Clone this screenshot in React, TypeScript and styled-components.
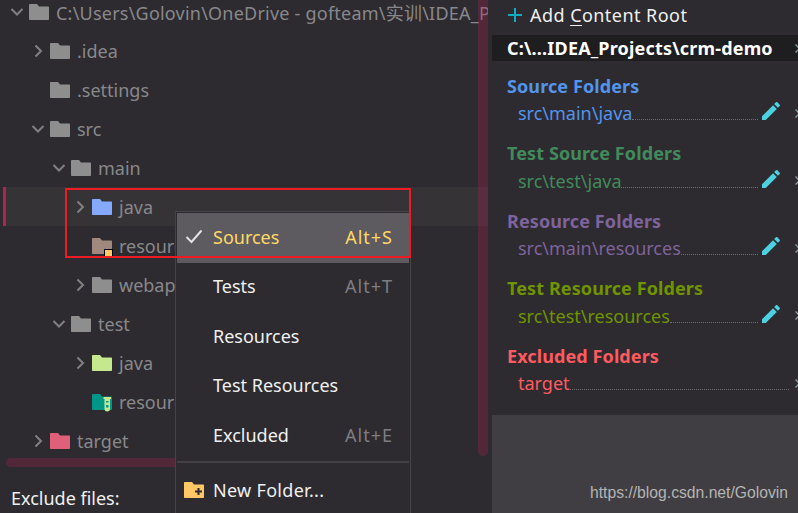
import React from "react";
import styled, { createGlobalStyle } from "styled-components";

const GlobalStyle = createGlobalStyle`
  html, body {
    margin: 0;
    padding: 0;
    background: #2d2b2f;
  }
  body {
    font-family: "Noto Sans", "Noto Sans CJK SC", sans-serif;
    font-size: 18px;
  }
`;

const Frame = styled.div`
  position: relative;
  display: flex;
  width: 798px;
  height: 513px;
  overflow: hidden;
  background: #2d2b2f;
`;

const LeftPane = styled.div`
  position: relative;
  display: flex;
  flex-direction: column;
  flex: 0 0 488px;
  width: 488px;
  overflow: hidden;
`;

const Tree = styled.div`
  flex: 0 0 466px;
  margin-top: -8px;
  overflow: hidden;
`;

const Row = styled.div<{ $depth: number; $selected?: boolean }>`
  display: flex;
  align-items: center;
  height: 39px;
  white-space: nowrap;
  color: #88888c;
  padding-left: ${(p) => 10 + p.$depth * 21 - (p.$selected ? 6 : 0)}px;
  margin-left: ${(p) => (p.$selected ? 3 : 0)}px;
  border-left: ${(p) => (p.$selected ? "3px solid #b3234f" : "none")};
  background: ${(p) => (p.$selected ? "#363337" : "transparent")};
`;

const ChevronSlot = styled.span`
  display: flex;
  align-items: center;
  justify-content: center;
  flex: 0 0 14px;
  height: 14px;
  margin-right: 5px;
`;

const RowLabel = styled.span<{ $root?: boolean }>`
  margin-left: 7px;
  letter-spacing: ${(p) => (p.$root ? "0.22px" : "0")};
`;

const HorizontalBar = styled.div`
  flex: 0 0 9px;
  width: 320px;
  margin-left: 6px;
  border-radius: 5px;
  background: rgba(168, 33, 84, 0.3);
`;

const ExcludeLabel = styled.div`
  margin: 19px 0 0 11px;
  color: #f0f0f0;
  line-height: 24px;
`;

const VerticalBar = styled.div`
  position: absolute;
  top: 0;
  right: 0;
  width: 10px;
  height: 456px;
  border-radius: 0 0 5px 5px;
  background: rgba(168, 33, 84, 0.3);
`;

const RightPane = styled.div`
  display: flex;
  flex-direction: column;
  flex: 1;
  margin-left: 4px;
  min-width: 0;
`;

const AddRoot = styled.div`
  display: flex;
  align-items: center;
  flex: 0 0 40px;
  margin-top: -5px;
  padding-left: 15px;
  gap: 7px;
  color: #f0f0f0;
  letter-spacing: 0.45px;
  white-space: nowrap;
  u {
    text-underline-offset: 3px;
  }
`;

const RootHeader = styled.div`
  display: flex;
  align-items: center;
  flex: 0 0 26px;
  padding-left: 15px;
  background: #1e1d1f;
  color: #fff;
  font-weight: 700;
  letter-spacing: 0.18px;
  white-space: nowrap;
`;

const Sections = styled.div`
  display: flex;
  flex-direction: column;
  gap: 12px;
  padding-top: 10.6px;
`;

const Section = styled.section<{ $color: string }>`
  color: ${(p) => p.$color};
`;

const SectionTitle = styled.div`
  height: 28px;
  padding-left: 15px;
  line-height: 28px;
  font-weight: 700;
  letter-spacing: 0.1px;
  white-space: nowrap;
`;

const PathRow = styled.div`
  display: flex;
  align-items: center;
  height: 27.5px;
  padding-left: 26px;
  white-space: nowrap;
`;

const Leader = styled.span<{ $long?: boolean }>`
  flex: 1;
  align-self: flex-end;
  margin: 0 ${(p) => (p.$long ? -9 : 4)}px 7px 0;
  border-bottom: 1px dotted #6e6e70;
`;

const PencilSlot = styled.span`
  display: flex;
  flex: none;
  margin-top: -4px;
`;

const CloseSlot = styled.span<{ $end?: boolean }>`
  display: flex;
  flex: 0 0 18px;
  justify-content: flex-end;
  margin-left: ${(p) => (p.$end ? "auto" : "0")};
  overflow: hidden;
`;

const BottomPanel = styled.div`
  display: flex;
  align-items: flex-end;
  justify-content: flex-end;
  margin-top: auto;
  height: 98px;
  padding: 0 10px 11px 0;
  box-sizing: border-box;
  background: #403e42;
`;

const Watermark = styled.span`
  font-family: "Liberation Sans", Arial, sans-serif;
  font-size: 15.7px;
  line-height: 18px;
  color: #b4b4b4;
`;

const Menu = styled.div`
  position: absolute;
  left: 175px;
  top: 211px;
  width: 236px;
  height: 302px;
  padding: 1px;
  box-sizing: border-box;
  background: #2d2b2f;
  border: solid #454347;
  border-width: 1px 1px 0;
  overflow: hidden;
`;

const MenuItem = styled.div<{ $active?: boolean }>`
  display: flex;
  align-items: center;
  height: 49.5px;
  padding: 0 17px 2px 0;
  box-sizing: border-box;
  color: ${(p) => (p.$active ? "#ffd866" : "#f0f0f0")};
  background: ${(p) => (p.$active ? "#5d5b5f" : "transparent")};
`;

const MenuIcon = styled.span`
  display: flex;
  align-items: center;
  justify-content: center;
  flex: 0 0 36px;
  padding-right: 2px;
  box-sizing: border-box;
`;

const MenuLabel = styled.span<{ $wide?: boolean }>`
  flex: 1;
  letter-spacing: ${(p) => (p.$wide ? "0.3px" : "0")};
`;

const Shortcut = styled.span<{ $active?: boolean }>`
  letter-spacing: 1px;
  margin-right: -1px;
  color: ${(p) => (p.$active ? "#ffd866" : "#7e7e82")};
`;

const MenuSeparator = styled.div`
  height: 2px;
  margin: 0 0 4px;
  background: #434145;
`;

const Highlight = styled.div`
  position: absolute;
  left: 65px;
  top: 188px;
  width: 346px;
  height: 70px;
  box-sizing: border-box;
  border: 2px solid #ed1c24;
  pointer-events: none;
`;

type FolderKind = "plain" | "source" | "resource" | "testSource" | "testResource" | "excluded";

const folderColors: Record<FolderKind, string> = {
  plain: "#8e8e8e",
  source: "#84a9ff",
  resource: "#a1887f",
  testSource: "#c5e88f",
  testResource: "#009688",
  excluded: "#e0607a",
};

const FolderIcon = ({ kind }: { kind: FolderKind }) => (
  <svg width="20" height="16" viewBox="0 0 20 16" style={{ overflow: "visible", flex: "none" }}>
    <path
      d="M1 0H8L10 2.5H19C19.6 2.5 20 2.9 20 3.5V15C20 15.6 19.6 16 19 16H1C.4 16 0 15.6 0 15V1C0 .4.4 0 1 0Z"
      fill={folderColors[kind]}
    />
    {kind === "resource" && <rect x="12.5" y="11.5" width="8" height="8" fill="#ffc766" stroke="#000" />}
    {kind === "testResource" && (
      <g>
        <path d="M11.5 3H19V5H18V15C18 16.5 17 17.5 15.2 17.5S12.5 16.5 12.5 15V5H11.5Z" fill="#c5e88f" />
        <rect x="14" y="7" width="2.5" height="1.5" fill="#009688" />
        <rect x="14" y="11" width="2.5" height="2.5" fill="#009688" />
      </g>
    )}
  </svg>
);

const Chevron = ({ open }: { open?: boolean }) => (
  <svg width="14" height="14" viewBox="0 0 14 14">
    <path
      d={open ? "M1.5 4L7 9.5L12.5 4" : "M4.5 1.5L10 7L4.5 12.5"}
      fill="none"
      stroke="#808082"
      strokeWidth="2"
    />
  </svg>
);

const PlusIcon = () => (
  <svg width="16" height="16" viewBox="0 0 16 16">
    <path d="M8 1V15M1 8H15" stroke="#12aabf" strokeWidth="2" />
  </svg>
);

const PencilIcon = () => (
  <svg width="18" height="18" viewBox="3 3 18 18">
    <path
      d="M3 17.25V21h3.75L17.81 9.94l-3.75-3.75L3 17.25zM20.71 7.04c.39-.39.39-1.02 0-1.41l-2.34-2.34c-.39-.39-1.02-.39-1.41 0l-1.83 1.83 3.75 3.75 1.83-1.83z"
      fill="#4dd0e1"
    />
  </svg>
);

const CloseIcon = () => (
  <svg width="9" height="9" viewBox="0 0 9 9" style={{ flex: "none", marginRight: -6 }}>
    <path d="M.5.5L8.5 8.5M8.5.5L.5 8.5" stroke="#8f9ca0" strokeWidth="1.3" fill="none" />
  </svg>
);

const CheckIcon = () => (
  <svg width="18" height="15" viewBox="0 0 18 15">
    <path d="M1.5 8L6.5 13L16.5 1.5" fill="none" stroke="#e2e2e2" strokeWidth="2" />
  </svg>
);

const NewFolderIcon = () => (
  <svg width="20" height="16" viewBox="0 0 20 16">
    <path
      d="M1 0H8L10 2.5H19C19.6 2.5 20 2.9 20 3.5V15C20 15.6 19.6 16 19 16H1C.4 16 0 15.6 0 15V1C0 .4.4 0 1 0Z"
      fill="#ffc766"
    />
    <path d="M14.5 6V13M11 9.5H18" stroke="#2d2b2f" strokeWidth="2" />
  </svg>
);

type TreeNode = {
  depth: number;
  label: string;
  kind: FolderKind;
  chevron?: "open" | "closed";
  selected?: boolean;
};

const nodes: TreeNode[] = [
  { depth: 0, label: "C:\\Users\\Golovin\\OneDrive - gofteam\\实训\\IDEA_Projects\\crm-demo", kind: "plain", chevron: "open" },
  { depth: 1, label: ".idea", kind: "plain", chevron: "closed" },
  { depth: 1, label: ".settings", kind: "plain" },
  { depth: 1, label: "src", kind: "plain", chevron: "open" },
  { depth: 2, label: "main", kind: "plain", chevron: "open" },
  { depth: 3, label: "java", kind: "source", chevron: "closed", selected: true },
  { depth: 3, label: "resources", kind: "resource" },
  { depth: 3, label: "webapp", kind: "plain", chevron: "closed" },
  { depth: 2, label: "test", kind: "plain", chevron: "open" },
  { depth: 3, label: "java", kind: "testSource", chevron: "closed" },
  { depth: 3, label: "resources", kind: "testResource" },
  { depth: 1, label: "target", kind: "excluded", chevron: "closed" },
];

const sections = [
  { title: "Source Folders", path: "src\\main\\java", color: "#5394ec", edit: true },
  { title: "Test Source Folders", path: "src\\test\\java", color: "#418a5c", edit: true },
  { title: "Resource Folders", path: "src\\main\\resources", color: "#7e639c", edit: true },
  { title: "Test Resource Folders", path: "src\\test\\resources", color: "#6f9400", edit: true },
  { title: "Excluded Folders", path: "target", color: "#ff5a5f", edit: false },
];

const menuItems = [
  { label: "Sources", shortcut: "Alt+S", active: true },
  { label: "Tests", shortcut: "Alt+T" },
  { label: "Resources" },
  { label: "Test Resources" },
  { label: "Excluded", shortcut: "Alt+E" },
];

const App = () => {
  return (
    <Frame>
      <GlobalStyle />
      <LeftPane>
        <Tree>
          {nodes.map((node, i) => (
            <Row key={i} $depth={node.depth} $selected={node.selected}>
              <ChevronSlot>{node.chevron && <Chevron open={node.chevron === "open"} />}</ChevronSlot>
              <FolderIcon kind={node.kind} />
              <RowLabel $root={i === 0}>{node.label}</RowLabel>
            </Row>
          ))}
        </Tree>
        <HorizontalBar />
        <ExcludeLabel>Exclude files:</ExcludeLabel>
        <VerticalBar />
      </LeftPane>
      <RightPane>
        <AddRoot>
          <PlusIcon />
          <span>
            Add <u>C</u>ontent Root
          </span>
        </AddRoot>
        <RootHeader>
          C:\...IDEA_Projects\crm-demo
          <CloseSlot $end>
            <CloseIcon />
          </CloseSlot>
        </RootHeader>
        <Sections>
          {sections.map((s) => (
            <Section key={s.title} $color={s.color}>
              <SectionTitle>{s.title}</SectionTitle>
              <PathRow>
                {s.path}
                <Leader $long={!s.edit} />
                {s.edit && (
                  <PencilSlot>
                    <PencilIcon />
                  </PencilSlot>
                )}
                <CloseSlot>
                  <CloseIcon />
                </CloseSlot>
              </PathRow>
            </Section>
          ))}
        </Sections>
        <BottomPanel>
          <Watermark>https://blog.csdn.net/Golovin</Watermark>
        </BottomPanel>
      </RightPane>
      <Menu>
        {menuItems.map((item) => (
          <MenuItem key={item.label} $active={item.active}>
            <MenuIcon>{item.active && <CheckIcon />}</MenuIcon>
            <MenuLabel>{item.label}</MenuLabel>
            {item.shortcut && <Shortcut $active={item.active}>{item.shortcut}</Shortcut>}
          </MenuItem>
        ))}
        <MenuSeparator />
        <MenuItem>
          <MenuIcon>
            <NewFolderIcon />
          </MenuIcon>
          <MenuLabel $wide>New Folder...</MenuLabel>
        </MenuItem>
      </Menu>
      <Highlight />
    </Frame>
  );
};

export default App;
